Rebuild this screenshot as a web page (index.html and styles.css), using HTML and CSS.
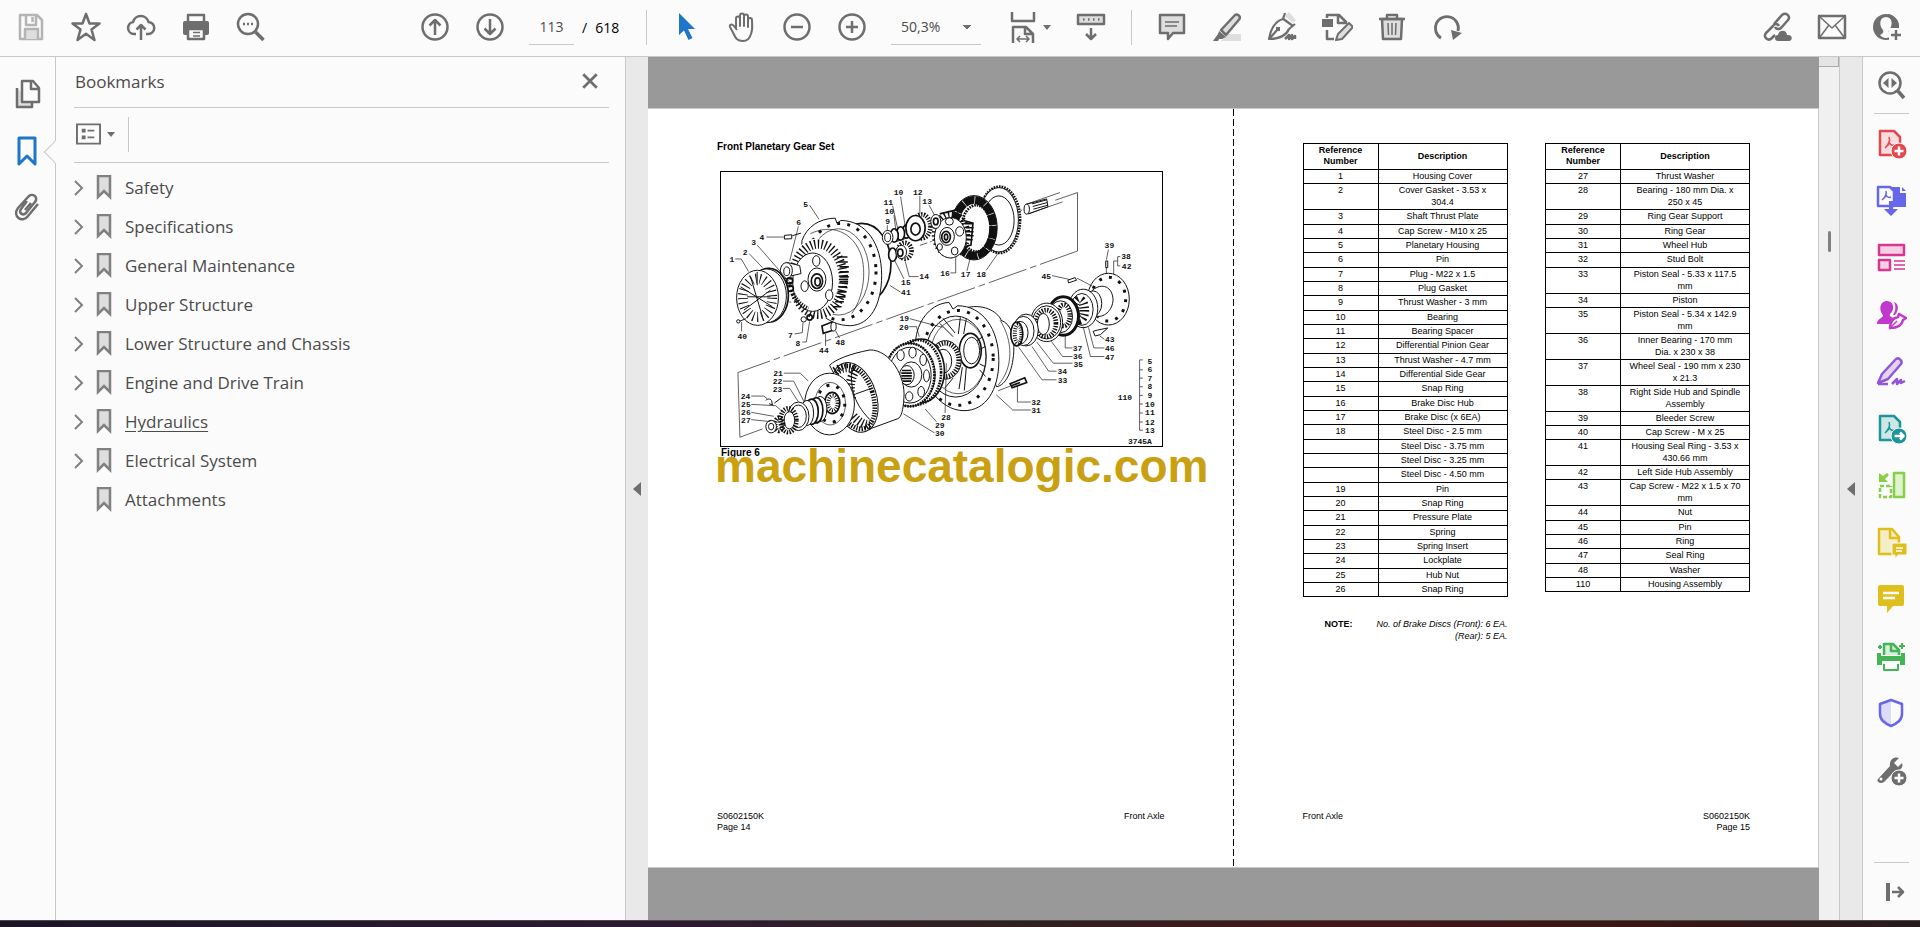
FILE: index.html
```html
<!DOCTYPE html>
<html lang="en">
<head>
  <meta charset="UTF-8">
  <meta name="viewport" content="width=device-width, initial-scale=1.0">
  <title>Front Planetary Gear Set</title>
  <link rel="stylesheet" href="styles.css">
</head>
<body>
  <header class="toolbar">
    <div class="tools tools-file">
      <button class="tool disabled" aria-label="Save">
        <svg class="icon" viewBox="0 0 32 32"><path d="M5 4h17l5 5v19H5z"/><path d="M11 4v10h10V4M17.500 6v5"/><path class="soft" d="M10 28V18h13v10"/></svg>
      </button>
      <button class="tool" aria-label="Star">
        <svg class="icon" viewBox="0 0 32 32"><path d="M16 3l3.500 9.500h10L21.500 18.500 24.500 29 16 22.800 7.500 29l3-10.500-8-6h10z"/></svg>
      </button>
      <button class="tool" aria-label="Upload">
        <svg class="icon" viewBox="0 0 32 32"><path d="M11 23H9a6 6 0 0 1-1-11.900A8 8 0 0 1 23.500 11 6 6 0 0 1 23 23h-2M16 29V14M11.500 18.500L16 14l4.500 4.500"/></svg>
      </button>
      <button class="tool" aria-label="Print">
        <svg class="icon" viewBox="0 0 32 32"><path d="M8 11V4h16v7"/><path class="solid" d="M3 12a2 2 0 0 1 2-2h22a2 2 0 0 1 2 2v10a2 2 0 0 1-2 2H5a2 2 0 0 1-2-2z"/><path class="paper" d="M8 18h16v10H8z"/><path d="M13 21.500h7M13 25h7" stroke-width="1.500"/></svg>
      </button>
      <button class="tool" aria-label="Find">
        <svg class="icon" viewBox="0 0 32 32"><circle cx="13" cy="13" r="10"/><path d="M20.500 21l8 8" stroke-width="3.500"/><path d="M8 13h2M12 13h2M16 13h2"/></svg>
      </button>
    </div>
    <div class="tools tools-pages">
      <button class="tool" aria-label="Previous page">
        <svg class="icon" viewBox="0 0 32 32"><circle cx="16" cy="16" r="12.500"/><path d="M16 24V9.500M10.500 14.500L16 9l5.500 5.500"/></svg>
      </button>
      <button class="tool" aria-label="Next page">
        <svg class="icon" viewBox="0 0 32 32"><circle cx="16" cy="16" r="12.500"/><path d="M16 8v14.500M10.500 17.500L16 23l5.500-5.500"/></svg>
      </button>
      <input class="page-input" type="text" value="113" aria-label="Page number">
      <span class="page-total"><span>/</span><span>618</span></span>
    </div>
    <div class="tools tools-view">
      <button class="tool" aria-label="Select">
        <svg class="icon" viewBox="0 0 32 32"><path class="accent" d="M8 2l16 16h-7l4.500 9-4 2-4.500-9.500L8 24z"/></svg>
      </button>
      <button class="tool" aria-label="Hand">
        <svg class="icon" viewBox="0 0 32 32"><path d="M10 18V7.500a2 2 0 0 1 4 0V15 4.500a2 2 0 0 1 4 0V15 5.500a2 2 0 0 1 4 0V16 9a2 2 0 0 1 4 0c0 5 1 9-1 14-1.500 5-4 7-8 7-6 0-7.500-3-9.500-7.500L4 16c-1-2.500 2-3.500 3.500-1.500L11 19" stroke-width="2"/></svg>
      </button>
      <button class="tool" aria-label="Zoom out">
        <svg class="icon" viewBox="0 0 32 32"><circle cx="16" cy="16" r="12.500"/><path d="M10 16h12"/></svg>
      </button>
      <button class="tool" aria-label="Zoom in">
        <svg class="icon" viewBox="0 0 32 32"><circle cx="16" cy="16" r="12.500"/><path d="M10 16h12M16 10v12"/></svg>
      </button>
      <select class="zoom-select" aria-label="Zoom level">
        <option>50,3%</option>
        <option>100%</option>
      </select>
      <button class="tool tool-menu" aria-label="Page fit">
        <svg class="icon" viewBox="0 0 32 32"><path d="M5 1v9h22V1M6 32V16h13l7 7v9M18 16v7h8"/><path d="M10 28h12M13 25l-3 3 3 3M19 25l3 3-3 3" stroke-width="1.500"/></svg>
        <span class="caret"></span>
      </button>
      <button class="tool" aria-label="Read mode">
        <svg class="icon" viewBox="0 0 32 32"><path class="soft" d="M3 4h26v9H3z"/><path d="M8 8.500h1.500M13 8.500h1.500M18 8.500h1.500M23 8.500h1.500M16 17v10M11 23l5 5 5-5"/></svg>
      </button>
    </div>
    <div class="tools tools-edit">
      <button class="tool" aria-label="Comment">
        <svg class="icon" viewBox="0 0 32 32"><path class="soft" d="M4 4h24v18H17l-5 6v-6H4z"/><path d="M9 11h14M9 15h12" stroke-width="1.500"/></svg>
      </button>
      <button class="tool" aria-label="Highlight">
        <svg class="icon" viewBox="0 0 32 32"><path class="tint" d="M17 23h13v7H10z"/><path class="soft" d="M10 19L24 4c2-1.500 6 1 4.500 4L15 24z"/><path class="solid" d="M8 20l7 6-4 2H8l-1 2H2l5-7z"/></svg>
      </button>
      <button class="tool" aria-label="Sign">
        <svg class="icon" viewBox="0 0 32 32"><path class="tint" d="M19 5l8 7 3-3-7-8z"/><path d="M16 7l11 8M19 2l-2 6C9 10 5 17 3 28c10 0 17-3 20-10l6-5M4 27l8-9" stroke-width="2.200"/><path class="solid" d="M10 16h4v4h-4z"/><path d="M19 28l4-4v4l3-4v4l3-3v3"/></svg>
      </button>
      <button class="tool" aria-label="Edit">
        <svg class="icon" viewBox="0 0 32 32"><path class="solid" d="M1 8h11v8H1z"/><path d="M6 7V4h12l7 7v2M17 4v8h8M6 19v9h7"/><path class="soft" d="M15 29l2-6L28 12l4 4-11 12z" stroke-width="2"/></svg>
      </button>
      <button class="tool" aria-label="Delete">
        <svg class="icon" viewBox="0 0 32 32"><path class="soft" d="M6 8h20l-1 20H7z"/><path d="M3 8h26M11 7V4h10v3"/><path d="M12 12l.5 12M16 12v12M20 12l-.5 12" stroke-width="1.500"/></svg>
      </button>
      <button class="tool" aria-label="Rotate">
        <svg class="icon" viewBox="0 0 32 32"><path d="M10 27A11.500 11.500 0 1 1 27 20" stroke-width="2.800"/><path class="solid" d="M20 19l11 3-9 7z"/></svg>
      </button>
    </div>
    <div class="tools tools-share">
      <button class="tool" aria-label="Share link">
        <svg class="icon" viewBox="0 0 32 32"><path d="M13 13l8-9c4-3 9 1 6 5l-7 8c-2 2-5 1-6-1M18 15c-2-3-5-2-6 0l-7 7c-3 4 2 9 6 5l3-3"/><path class="solid" d="M17 30a3 3 0 0 1 0-6c1-6 9-5 9 0 6-1 6 6 2 6z"/></svg>
      </button>
      <button class="tool" aria-label="Email">
        <svg class="icon" viewBox="0 0 32 32"><path d="M3 5h26v22H3z"/><path d="M4 6l12 11L28 6M4 26l9-12M28 26l-9-12" stroke-width="1.500"/></svg>
      </button>
      <button class="tool" aria-label="Account">
        <svg class="icon" viewBox="0 0 32 32"><circle class="solid" cx="15" cy="16" r="13"/><path class="cut" d="M15 6c7 0 7 9 3 13-1 3 1 4 3 5-3 4-9 4-12 0 2-1 4-2 3-5-4-4-4-13 3-13z"/><path class="cut" d="M18 17h14v15H18z"/><path class="solid" d="M17 3a13 13 0 0 1 11 14h-4l-4-1c3-5 2-10-3-11z"/><path d="M25 19v10M20 24h10"/></svg>
      </button>
    </div>
  </header>

  <div class="workspace">
    <nav class="rail" aria-label="Panels">
      <button class="rail-button" aria-label="Page thumbnails">
        <svg class="icon" viewBox="0 0 32 32"><path class="soft" d="M6 10v19h15v-5"/><path class="paper" d="M11 3h11l6 7v14H11z"/><path d="M20 3v8h8"/></svg>
      </button>
      <button class="rail-button active" aria-label="Bookmarks">
        <svg class="icon" viewBox="0 0 32 32"><path d="M8 3h16v26l-8-8-8 8z" stroke-width="3"/></svg>
      </button>
      <button class="rail-button" aria-label="Attachments">
        <svg class="icon" viewBox="0 0 32 32"><path d="M16 9l-6 8c-3 4 2 7 5 4l9-11c4-5-3-10-7-5L7 16c-6 8 4 16 10 8l10-12M20 11l-6 7"/></svg>
      </button>
    </nav>

    <aside class="panel">
      <div class="panel-header">
        <h2>Bookmarks</h2>
        <button class="close" aria-label="Close panel">
          <svg viewBox="0 0 16 16"><path d="M2 2l12 12M14 2L2 14"/></svg>
        </button>
      </div>
      <div class="panel-options">
        <button class="options" aria-label="Options">
          <svg viewBox="0 0 26 22"><path d="M1 1h24v20H1z"/><path d="M6 7.500h4M6 14.500h4" stroke-width="4"/><path d="M12 7.500h7M12 14.500h7"/></svg>
          <span class="caret"></span>
        </button>
      </div>
      <ul class="bookmarks" id="bookmarks"></ul>
    </aside>

    <button class="splitter splitter-left" aria-label="Collapse panel"><span class="collapse"></span></button>

    <main class="viewer">
      <div class="spread">
        <article class="page">
          <h1>Front Planetary Gear Set</h1>
          <figure>
            <svg class="diagram" viewBox="31 124 1327 826" role="img" aria-label="Exploded view of the front planetary gear set">
              <!-- axis and fold lines -->
              <g class="thin">
                <path d="M1038 209l67-23v176" />
                <path d="M1105 362L82 728" stroke-dasharray="120 12 20 12"/>
                <path d="M82 728l6 195 68-25"/>
                <path d="M500 385l50-14M630 345l60-20M860 268l90-34M205 510l60 10" stroke-dasharray="24 8 6 8"/>
              </g>
              <!-- planetary housing -->
              <g>
                <ellipse cx="455" cy="400" rx="88" ry="121" class="bold"/>
                <path class="paper" d="M275 330c15-40 50-66 100-67l5 15 12-8c75 0 123 70 123 165 0 90-35 150-95 152-70 0-130-60-150-130z"/>
                <ellipse cx="385" cy="425" rx="92" ry="130" class="thin"/>
                <path d="M300 310c60-30 130-10 155 70 15 60 0 130-30 170" class="thin"/>
                <ellipse cx="390" cy="424" rx="108" ry="145" class="holes"/>
                <ellipse cx="322" cy="447" rx="92" ry="123" class="paper outline-none"/>
                <ellipse cx="324" cy="447" rx="76" ry="106" class="ribs"/>
                <path d="M380 380h32M385 395h28M388 410h28M388 425h28M388 440h28M388 455h26M385 470h26M382 485h26M380 500h26M375 515h26M368 530h26" class="bold"/>
                <ellipse cx="307" cy="456" rx="60" ry="88"/>
                <ellipse cx="318" cy="392" rx="11" ry="16"/>
                <ellipse cx="357" cy="495" rx="11" ry="16"/>
                <ellipse cx="283" cy="468" rx="11" ry="16"/>
                <ellipse cx="320" cy="448" rx="27" ry="35"/>
                <ellipse cx="320" cy="453" rx="17" ry="22" class="bold"/>
                <ellipse cx="322" cy="455" rx="8" ry="12" class="bold"/>
                <path class="paper" d="M228 396l40 10 4 24-34 8"/>
                <ellipse cx="228" cy="421" rx="18" ry="24"/>
                <ellipse cx="229" cy="423" rx="9" ry="13"/>
                <circle cx="238" cy="452" r="9" class="bold"/>
                <circle cx="240" cy="475" r="9" class="bold"/>
                <path d="M248 492c12 22 26 36 46 44" class="teeth"/>
                <circle cx="280" cy="568" r="8"/><circle cx="298" cy="562" r="8" class="bold"/>
                <path d="M222 315l22-2v12l-22 1zM246 316l26-8"/>
                <path d="M335 588l30-12 6 24-32 10z" class="bold"/><ellipse cx="370" cy="590" rx="8" ry="13"/>
              </g>
              <!-- housing cover -->
              <g>
                <ellipse cx="175" cy="495" rx="59" ry="81" class="bold"/>
                <ellipse cx="168" cy="497" rx="60" ry="81"/>
                <ellipse cx="141" cy="503" rx="63" ry="83"/>
                <ellipse cx="141" cy="503" rx="44" ry="58" class="spokes"/>
                <path d="M90 470l96 60M120 440l36 120M100 540l80-60M140 425v40M110 500h70"/>
                <circle cx="83" cy="574" r="5"/><path d="M88 573l18-7"/>
              </g>
              <!-- sun gear stack -->
              <g>
                <path d="M545 302l60-20 8 34-62 20z" class="paper"/>
                <ellipse cx="603" cy="299" rx="14" ry="20"/>
                <ellipse cx="590" cy="303" rx="12" ry="20" class="bold"/>
                <ellipse cx="572" cy="309" rx="12" ry="20" class="bold"/>
                <ellipse cx="553" cy="315" rx="12" ry="20" class="bold"/>
                <ellipse cx="533" cy="321" rx="16" ry="21"/>
                <ellipse cx="533" cy="321" rx="9" ry="13"/>
                <ellipse cx="636" cy="288" rx="26" ry="36" class="teeth"/>
                <ellipse cx="617" cy="293" rx="29" ry="38" class="bold"/>
                <ellipse cx="617" cy="296" rx="14" ry="18" class="bold"/>
                <ellipse cx="548" cy="373" rx="12" ry="20" class="bold"/>
                <ellipse cx="585" cy="361" rx="20" ry="24" class="teeth"/>
                <ellipse cx="574" cy="365" rx="16" ry="20" class="paper"/>
                <ellipse cx="571" cy="367" rx="8" ry="11" class="bold"/>
              </g>
              <!-- brake discs and hub -->
              <g>
                <ellipse cx="870" cy="268" rx="62" ry="100" class="teeth-fine"/>
                <ellipse cx="868" cy="268" rx="59" ry="97" class="paper"/>
                <ellipse cx="868" cy="270" rx="46" ry="74"/>
                <ellipse cx="793" cy="292" rx="70" ry="97"/>
                <ellipse cx="793" cy="292" rx="58" ry="84" class="friction"/>
                <ellipse cx="800" cy="294" rx="44" ry="70" class="teeth-fine"/>
                <ellipse cx="724" cy="312" rx="44" ry="58" class="ribs"/>
                <path d="M690 250l60-14M762 270l28 8-6 66-24 6" class="bold"/>
                <path d="M765 280h24M768 292h24M768 304h24M768 316h24M765 328h24" class="bold"/>
                <ellipse cx="722" cy="322" rx="48" ry="61" class="paper"/>
                <ellipse cx="719" cy="273" rx="12" ry="11"/>
                <ellipse cx="750" cy="303" rx="12" ry="14"/>
                <ellipse cx="735" cy="362" rx="10" ry="12"/>
                <ellipse cx="690" cy="350" rx="8" ry="10"/>
                <ellipse cx="712" cy="318" rx="22" ry="27"/>
                <ellipse cx="709" cy="320" rx="13" ry="17" class="bold"/>
                <ellipse cx="709" cy="320" rx="5" ry="9" class="bold"/>
                <ellipse cx="678" cy="273" rx="15" ry="21" class="paper"/>
                <ellipse cx="678" cy="273" rx="7" ry="10" class="bold"/>
                <path d="M948 222l104-36M956 250l104-36" class="thin"/>
                <path d="M952 221l60-16 4 24-58 21z"/>
                <path d="M968 220l44-12M970 228l44-12M972 236l44-12"/>
                <ellipse cx="952" cy="236" rx="8" ry="15" class="paper"/>
              </g>
              <!-- wheel hub -->
              <g>
                <path class="paper" d="M770 533c60-15 100 20 105 38 30 10 40 50 38 95-4 60-24 100-52 105z"/>
                <path d="M872 571c38 60 42 140-6 195" class="thin"/>
                <path class="paper" d="M618 625c8-60 50-106 100-108l12 20 14-10c75 0 124 70 124 165 0 90-40 151-105 151-75 0-136-90-145-190z"/>
                <ellipse cx="744" cy="684" rx="107" ry="143" class="holes"/>
                <ellipse cx="738" cy="680" rx="92" ry="122"/>
                <ellipse cx="745" cy="680" rx="84" ry="112" class="thin"/>
                <ellipse cx="782" cy="662" rx="33" ry="52" class="bold"/>
                <ellipse cx="786" cy="662" rx="24" ry="40"/>
                <path d="M690 580l40 40M700 565l36 44M752 562l-6 50M770 566l-8 46M820 620l-18 12M826 650l-14 8M810 720l18 20M770 712l-6 70M758 712l-10 66M730 745l-25 30M826 710l-16-8"/>
              </g>
              <!-- ring gear support and bearing -->
              <g>
                <ellipse cx="707" cy="690" rx="48" ry="58" class="paper"/>
                <ellipse cx="707" cy="690" rx="40" ry="50" class="teeth"/>
                <ellipse cx="700" cy="694" rx="26" ry="36"/>
                <ellipse cx="634" cy="723" rx="70" ry="96" class="bold"/>
                <ellipse cx="622" cy="727" rx="72" ry="97" class="teeth-fine"/>
                <ellipse cx="600" cy="735" rx="76" ry="95" class="paper"/>
                <ellipse cx="600" cy="735" rx="74" ry="95" class="teeth-fine"/>
                <ellipse cx="600" cy="736" rx="64" ry="84"/>
                <g class="paper">
                  <ellipse cx="572" cy="676" rx="11" ry="16"/>
                  <ellipse cx="608" cy="668" rx="11" ry="16"/>
                  <ellipse cx="640" cy="690" rx="10" ry="17"/>
                  <ellipse cx="650" cy="738" rx="9" ry="18"/>
                  <ellipse cx="634" cy="786" rx="10" ry="16"/>
                  <ellipse cx="598" cy="800" rx="11" ry="14"/>
                  <ellipse cx="564" cy="782" rx="10" ry="15"/>
                  <ellipse cx="550" cy="738" rx="8" ry="17"/>
                </g>
                <ellipse cx="604" cy="734" rx="32" ry="38" class="paper"/>
                <ellipse cx="591" cy="736" rx="22" ry="29" class="paper"/>
                <path d="M576 722h28M574 730h32M574 738h32M574 746h32M578 754h26" class="bold"/>
              </g>
              <!-- ring gear -->
              <g>
                <path class="paper" d="M358 706c20-18 60-34 122-46 60 0 108 80 102 145-2 36-8 58-18 62l-104 38z"/>
                <ellipse cx="433" cy="803" rx="66" ry="108" transform="rotate(-18 433 803)"/>
                <ellipse cx="433" cy="803" rx="56" ry="98" transform="rotate(-18 433 803)" class="teeth"/>
                <path d="M375 725c20-15 45-15 62-5-20 30-20 60-12 90M430 860c14 16 32 28 50 26" class="ribs"/>
                <path d="M436 793l50-18"/>
                <path d="M425 715c-5 60 5 110 65 165"/>
              </g>
              <!-- pressure plate and springs -->
              <g>
                <ellipse cx="358" cy="823" rx="75" ry="93" class="paper"/>
                <ellipse cx="360" cy="822" rx="46" ry="64" class="thin"/>
                <ellipse cx="362" cy="822" rx="42" ry="56" class="holes"/>
                <ellipse cx="366" cy="820" rx="23" ry="32" class="bold"/>
                <ellipse cx="368" cy="820" rx="14" ry="22" class="ribs-small"/>
                <ellipse cx="330" cy="838" rx="20" ry="38"/>
                <ellipse cx="318" cy="842" rx="20" ry="38" class="bold"/>
                <ellipse cx="304" cy="846" rx="20" ry="38" class="bold"/>
                <ellipse cx="290" cy="850" rx="20" ry="38"/>
                <ellipse cx="264" cy="860" rx="32" ry="43" class="paper"/>
                <ellipse cx="264" cy="860" rx="24" ry="34"/>
                <ellipse cx="234" cy="872" rx="24" ry="36" class="teeth"/>
                <ellipse cx="237" cy="872" rx="16" ry="26" class="paper"/>
                <ellipse cx="206" cy="884" rx="12" ry="20" class="teeth"/>
                <ellipse cx="182" cy="891" rx="16" ry="19" class="paper"/>
                <ellipse cx="182" cy="891" rx="8" ry="10"/>
                <path d="M166 812c4-6 18-6 18 4l2 10-10-4M192 820l20-15"/>
              </g>
              <!-- outer bearings and spindle -->
              <g>
                <ellipse cx="1198" cy="507" rx="63" ry="78"/>
                <ellipse cx="1198" cy="507" rx="52" ry="66" class="holes"/>
                <path d="M1150 480c30-24 60-10 62 28 0 32-30 60-54 48z" class="paper"/>
                <ellipse cx="1152" cy="520" rx="26" ry="38" class="paper"/>
                <ellipse cx="1122" cy="535" rx="44" ry="58" class="paper"/>
                <ellipse cx="1118" cy="538" rx="34" ry="48"/>
                <ellipse cx="1112" cy="540" rx="14" ry="30" class="ribs"/>
                <ellipse cx="1062" cy="558" rx="46" ry="58" class="friction-thin"/>
                <ellipse cx="1054" cy="560" rx="36" ry="48"/>
                <ellipse cx="1064" cy="556" rx="18" ry="32" class="teeth"/>
                <ellipse cx="1012" cy="577" rx="48" ry="58" class="paper"/>
                <ellipse cx="1012" cy="577" rx="42" ry="50"/>
                <ellipse cx="1010" cy="580" rx="30" ry="40" class="teeth"/>
                <ellipse cx="1002" cy="582" rx="18" ry="32" class="paper"/>
                <ellipse cx="950" cy="600" rx="37" ry="48" class="paper"/>
                <ellipse cx="942" cy="603" rx="32" ry="44"/>
                <ellipse cx="932" cy="608" rx="24" ry="34" class="paper"/>
                <ellipse cx="922" cy="612" rx="18" ry="36" class="bold"/>
                <ellipse cx="926" cy="612" rx="10" ry="28" class="ribs-small"/>
                <path d="M1152 604l14-4 30-6-22 20-16 4zM1190 392h6v20h-6zM1076 450l22-8 4 8-24 8z"/>
                <path d="M902 762l44-18 6 14-44 16zM906 768l26-10" class="bold"/>
              </g>
              <!-- leader lines -->
              <g class="thin">
                <path d="M74 386h18l22 38M116 370l40 42M140 344l96 110M168 320h52M298 224l28 42M264 288l-26 104M532 284v16M552 254l6 48M548 226l16 72M572 198l14 90M630 196v54M658 224l16 30"/>
                <path d="M626 439h-28l-12-46M582 446l-28-56M572 486l-32-20M722 428h16v-45M772 422l10-40M830 420l36-52M93 604v-28M252 612l24-4 2-30M276 636h12l10-62M346 648v-36M388 624l-12-22"/>
                <path d="M600 566l98 26M598 590h22l8 30M220 730h50l24 24M218 754h32l32 64M218 776h20l26 40M122 799h38l10 8M122 824l74 4 20 18M122 848l68 12M122 870l58 6M706 850l4-150M680 876l-34-38M674 910l-94-58"/>
                <path d="M964 841h-54l-50-46M964 817h-40v-50M1042 750h-44l-70-98M1042 724h-24l-50-74M1090 700h-58l-50-64M1090 680h-30l-34-46M1090 654h-22v-42M1186 628l-14-10M1186 654h-32l-16-62M1186 680h-42l-22-90"/>
                <path d="M1198 358l-6 30M1192 412v18M1234 379h-8v28h8M1226 392h-12v40M1028 436l54 12M1104 444l46 24"/>
                <path d="M1302 690h-10v212h10M1292 720h10M1292 745h10M1292 771h10M1292 797h10M1292 823h10M1292 850h10M1292 877h10M866 783l36-14"/>
              </g>
              <g class="callouts" id="callouts"></g>
            </svg>
            <figcaption>Figure 6</figcaption>
            <div class="watermark">machinecatalogic.com</div>
          </figure>
          <footer class="page-footer">
            <p>S0602150K<br>Page 14</p>
            <p>Front Axle</p>
          </footer>
        </article>

        <article class="page page-right">
          <div class="tables">
            <table class="parts">
              <thead>
                <tr><th>Reference<br>Number</th><th>Description</th></tr>
              </thead>
              <tbody id="parts-left"></tbody>
            </table>
            <table class="parts">
              <thead>
                <tr><th>Reference<br>Number</th><th>Description</th></tr>
              </thead>
              <tbody id="parts-right"></tbody>
            </table>
          </div>
          <div class="note">
            <strong>NOTE:</strong>
            <em>No. of Brake Discs (Front): 6 EA.<br>(Rear): 5 EA.</em>
          </div>
          <footer class="page-footer">
            <p>Front Axle</p>
            <p class="right">S0602150K<br>Page 15</p>
          </footer>
        </article>
      </div>
    </main>

    <div class="scrollbar"><span class="scroll-top"></span><span class="scroll-thumb"></span></div>
    <button class="splitter splitter-right" aria-label="Collapse tools"><span class="collapse"></span></button>

    <nav class="rail rail-right" aria-label="Tools">
      <button class="rail-button" aria-label="Search tools">
        <svg class="icon" viewBox="0 0 32 32"><circle cx="15" cy="14" r="10.500"/><path d="M22 21l7 8" stroke-width="3.500"/><path class="solid" d="M13.500 9v10L8 14zM16.500 9v10l5.500-5z"/></svg>
      </button>
      <hr>
      <button class="rail-button red" aria-label="Create PDF">
        <svg class="icon" viewBox="0 0 32 32"><path class="soft" d="M5 4h14l6 6v18H5z"/><path d="M14 10c2 5-3 10-4 11M14 15c1 3 3 4 6 3M14 17l-4 4" stroke-width="1.500"/><circle class="badge" cx="24" cy="24" r="8"/><path class="mark" d="M24 19.500v9M19.500 24h9"/></svg>
      </button>
      <button class="rail-button blue" aria-label="Combine files">
        <svg class="icon" viewBox="0 0 32 32"><path class="solid" d="M15 3h10v6h6v14H15z"/><path class="solid" d="M27 3l4 4h-4z"/><path class="paper" d="M3 3h12l4 4v15H3z"/><path d="M11 7c1 4-2 7-3 8M11 11c1 2 3 3 5 2M11 12l-4 4" stroke-width="1.500"/><path class="solid" d="M14 17h4v8h5l-7 7-7-7h5z"/></svg>
      </button>
      <button class="rail-button pink" aria-label="Organize pages">
        <svg class="icon" viewBox="0 0 32 32"><path class="soft" d="M4 4h25v10H4zM4 19h11v10H4z"/><path d="M19 20h11M19 24h11M19 28h11" stroke-width="1.500"/></svg>
      </button>
      <button class="rail-button magenta" aria-label="Request signatures">
        <svg class="icon" viewBox="0 0 32 32"><path class="solid" d="M12 3c7 0 8 9 3 13-1 3 2 3 4 4l-5 6H2c0-6 7-6 6-9C4 13 4 3 12 3zM19 4c6 2 4 10 1 13l-2 0c3-4 3-10 1-13z"/><path class="paper" d="M15 30c0-6 3-10 8-11l1-3 7 4-3 2c-1 5-6 8-13 8z"/><path d="M16 29l6-6" stroke-width="1.500"/></svg>
      </button>
      <button class="rail-button purple" aria-label="Fill and sign">
        <svg class="icon" viewBox="0 0 32 32"><path class="soft" d="M3 28l4-9L21 4c3-2 7 2 5 5L13 24z"/><path d="M3 29h10M17 29l5-5v5l4-4v3l4-2"/></svg>
      </button>
      <button class="rail-button teal" aria-label="Export PDF">
        <svg class="icon" viewBox="0 0 32 32"><path class="soft" d="M5 4h14l6 6v18H5z"/><path d="M14 10c2 5-3 10-4 11M14 15c1 3 3 4 6 3M14 17l-4 4" stroke-width="1.500"/><circle class="badge" cx="24" cy="24" r="8"/><path class="mark" d="M19.500 24h9M25 20.500l3.500 3.500-3.500 3.500"/></svg>
      </button>
      <button class="rail-button lime" aria-label="Compare files">
        <svg class="icon" viewBox="0 0 32 32"><path class="soft" d="M19 4h10v24H19z"/><path d="M15 17H5v11h11V17" stroke-dasharray="4 2"/><path class="solid" d="M4 4v9h9l-3-3 4-4-2-2-4 3z"/></svg>
      </button>
      <button class="rail-button gold" aria-label="Send for comments">
        <svg class="icon" viewBox="0 0 32 32"><path class="soft" d="M4 3h13l7 8v17H4z"/><path d="M15 4v8h8"/><path class="badge" d="M17 17h15v12h-9l-3 4v-4h-3z"/><path class="mark" d="M21 22h7M21 25h6" stroke-width="1.500"/></svg>
      </button>
      <button class="rail-button gold" aria-label="Comment">
        <svg class="icon" viewBox="0 0 32 32"><path class="solid" d="M5 2h22a2 2 0 0 1 2 2v17a2 2 0 0 1-2 2h-9l-6 7v-7H5a2 2 0 0 1-2-2V4a2 2 0 0 1 2-2z"/><path class="mark" d="M8 10h16M8 15h12"/></svg>
      </button>
      <button class="rail-button green" aria-label="Scan and OCR">
        <svg class="icon" viewBox="0 0 32 32"><path class="soft" d="M9 15V4h9l6 6v5"/><path d="M16 4v7h7"/><path class="solid" d="M2 13h4v3h20v-3h4v12h-5v-4H7v4H2z"/><path d="M9 24v6h14v-6M27 3v6M24 6h6M5 5v4M3 7h4" stroke-width="2"/></svg>
      </button>
      <button class="rail-button blue" aria-label="Protect">
        <svg class="icon" viewBox="0 0 32 32"><path class="tint" d="M16 3L5 7v11c0 5 5 9 11 11z"/><path d="M16 3l11 4v10c0 6-4 9-11 12C9 26 5 23 5 17V7z"/></svg>
      </button>
      <button class="rail-button" aria-label="More tools">
        <svg class="icon" viewBox="0 0 32 32"><path class="solid" d="M3 25l12-13c-1-6 4-10 9-8l-5 5 4 4 4-4c2 5-3 8-6 7L9 28c-4 3-8-1-6-3z"/><circle class="hole" cx="6" cy="25" r="1.500"/><circle class="badge" cx="24" cy="24" r="8"/><path class="mark" d="M24 19.500v9M19.500 24h9"/></svg>
      </button>
      <div class="rail-bottom">
        <hr>
        <button class="rail-button" aria-label="Hide tools pane">
          <svg class="icon" viewBox="0 0 32 32"><path d="M13 7v18" stroke-width="4"/><path d="M17 16h11M23 11l5 5-5 5"/></svg>
        </button>
      </div>
    </nav>
  </div>

  <div class="desktop-edge"></div>
  <script src="script.js"></script>
</body>
</html>
```
FILE: styles.css
```css
:root {
  --ui-bg: #fbfbfb;
  --line: #c8c8c8;
  --icon: #6e6e6e;
  --icon-soft: #dedede;
  --accent: #1f74cc;
  --text: #4b4b4b;
}

* {
  margin: 0;
  padding: 0;
  box-sizing: border-box;
}

body {
  display: flex;
  flex-direction: column;
  min-height: 100vh;
  font-family: "Open Sans", "Noto Sans", sans-serif;
  background-color: var(--ui-bg);
  color: var(--text);
}

button {
  border: none;
  background: none;
  color: inherit;
  font: inherit;
  cursor: pointer;
}

/* Icons */
svg {
  display: block;
  fill: none;
  stroke: currentColor;
  stroke-width: 2.5;
}

.icon {
  width: 32px;
  height: 32px;
  flex: none;
}

.icon path,
.icon circle {
  stroke-linejoin: round;
}

.soft {
  fill: var(--icon-soft);
}

.tint {
  fill: var(--icon-soft);
  stroke: none;
}

.solid {
  fill: currentColor;
  stroke: none;
}

.accent {
  fill: var(--accent);
  stroke: none;
}

.cut {
  fill: var(--ui-bg);
  stroke: none;
}

.icon .paper {
  fill: var(--ui-bg);
}

.badge {
  fill: currentColor;
  stroke: var(--ui-bg);
  stroke-width: 1;
}

.mark {
  stroke: #ffffff;
}

.hole {
  fill: #ffffff;
  stroke: none;
}

.caret {
  border: 4px solid transparent;
  border-top: 5px solid var(--icon);
  border-bottom: none;
}

/* Toolbar */
.toolbar {
  display: flex;
  align-items: center;
  height: 57px;
  padding: 0 6px 2px 3px;
  border-bottom: 1px solid var(--line);
  color: var(--icon);
}

.tools {
  display: flex;
  align-items: center;
}

.tool {
  display: flex;
  align-items: center;
  justify-content: center;
  width: 55px;
  height: 44px;
}

.tool-menu {
  gap: 4px;
  width: 52px;
  margin: 0 8px 0 22px;
}

.disabled {
  color: #b4b4b4;
}

.tools-pages {
  margin-left: 129px;
}

.page-input,
.zoom-select {
  height: 36px;
  border: none;
  border-bottom: 1px solid var(--line);
  background: none;
  color: var(--text);
  font-family: inherit;
  font-size: 14px;
}

.page-input {
  width: 45px;
  margin-left: 12px;
  text-align: center;
}

.page-total {
  display: flex;
  gap: 8px;
  width: 72px;
  padding-left: 8px;
  color: #000000;
  font-size: 14px;
}

.tools-view,
.tools-edit {
  height: 35px;
  padding-left: 12px;
  border-left: 1px solid var(--line);
}

.tools-edit {
  margin-left: 13px;
}

.zoom-select {
  width: 90px;
  margin-left: 12px;
  padding: 0 10px;
  appearance: none;
  background: linear-gradient(to bottom right, var(--icon) 50%, transparent 50%) 76px 16px / 4px 5px no-repeat,
    linear-gradient(to bottom left, var(--icon) 50%, transparent 50%) 72px 16px / 4px 5px no-repeat;
}

.tools-share {
  margin-left: auto;
}

/* Workspace */
.workspace {
  display: flex;
  flex: 1;
}

.rail {
  display: flex;
  flex: none;
  flex-direction: column;
  width: 56px;
  padding-top: 8px;
  border-right: 1px solid var(--line);
  color: var(--icon);
}

.rail-button {
  position: relative;
  display: flex;
  flex: none;
  align-items: center;
  justify-content: center;
  width: 53px;
  height: 57px;
}

.rail-button.active {
  color: var(--accent);
}

.rail-button.active::after {
  content: "";
  position: absolute;
  right: -10px;
  top: 22px;
  width: 14px;
  height: 14px;
  border: 1px solid var(--line);
  border-top-color: transparent;
  border-right-color: transparent;
  background: var(--ui-bg);
  transform: rotate(45deg);
}

/* Bookmarks panel */
.panel {
  flex: none;
  width: 570px;
  padding: 0 16px 0 18px;
  border-right: 1px solid var(--line);
}

.panel-header {
  display: flex;
  align-items: center;
  justify-content: space-between;
  height: 51px;
  padding: 0 10px 2px 1px;
  border-bottom: 1px solid var(--line);
}

.panel-header h2 {
  font-size: 17px;
  font-weight: normal;
}

.close {
  width: 18px;
  height: 18px;
  color: var(--icon);
}

.close svg {
  width: 18px;
  height: 18px;
}

.panel-options {
  display: flex;
  align-items: center;
  height: 55px;
  padding-bottom: 2px;
  border-bottom: 1px solid var(--line);
}

.options {
  display: flex;
  align-items: center;
  gap: 6px;
  width: 55px;
  height: 35px;
  padding-left: 2px;
  border-right: 1px solid var(--line);
  color: var(--icon);
}

.options svg {
  width: 25px;
  height: 22px;
  stroke-width: 2;
}

.bookmarks {
  padding-top: 5px;
  list-style: none;
}

.bookmark {
  display: flex;
  align-items: center;
  height: 39px;
  font-size: 17px;
}

.bookmark svg {
  flex: none;
  color: #808080;
}

.bookmark .toggle {
  width: 22px;
  height: 18px;
}

.toggle svg {
  width: 10px;
  height: 16px;
  stroke-width: 2;
}

.bookmark .flag {
  width: 16px;
  height: 25px;
  margin-right: 13px;
}

.bookmark a {
  color: inherit;
  text-decoration: none;
}

.bookmark a.current {
  text-decoration: underline;
  text-underline-offset: 3px;
}

/* Splitters and scrollbar */
.splitter {
  display: flex;
  flex: none;
  align-items: center;
  justify-content: center;
  width: 22px;
  background-color: #e9e9e9;
}

.splitter-right {
  width: 23px;
  border-right: 1px solid var(--line);
}

.collapse {
  border: 7px solid transparent;
  border-right: 8px solid var(--icon);
  border-left: none;
}

.scrollbar {
  flex: none;
  width: 21px;
  border-right: 1px solid var(--line);
  background-color: #f0f0f0;
}

.scroll-top {
  display: block;
  height: 10px;
  border: 1px solid #aaaaaa;
  border-width: 0 1px 1px 0;
  background-color: #e4e4e4;
}

.scroll-thumb {
  display: block;
  width: 3px;
  height: 21px;
  margin: 164px 0 0 9px;
  border-radius: 2px;
  background-color: #808080;
}

/* Document */
.viewer {
  display: flex;
  flex: 1;
  min-width: 0;
  padding: 51px 0 52px;
  background-color: #999999;
}

.spread {
  display: flex;
  flex: 1;
  border: 1px solid var(--line);
  border-left: none;
  background-color: #ffffff;
  color: #000000;
  font-family: "Liberation Sans", Arial, sans-serif;
  font-size: 9px;
  line-height: 12px;
}

.page {
  display: flex;
  flex: 1;
  flex-direction: column;
  padding: 32px 68px 34px 69px;
}

.page-right {
  padding: 34px 68px 34px 70px;
  background: repeating-linear-gradient(to bottom, #000000 0 7px, transparent 7px 10px) left top / 1px 100% no-repeat;
}

.page h1 {
  margin-bottom: 18px;
  font-size: 10px;
  line-height: 12px;
}

figure {
  position: relative;
  margin: 0 2px 0 3px;
}

.diagram {
  width: 100%;
  border: 1px solid #000000;
  stroke: #111111;
  stroke-width: 3;
}

.diagram .paper,
.diagram ellipse {
  fill: #ffffff;
}

.diagram .outline-none {
  stroke: none;
}

.diagram .thin {
  fill: none;
  stroke-width: 2;
}

.diagram .bold {
  stroke-width: 5;
}

.diagram .holes {
  fill: none;
  stroke-width: 9;
  stroke-dasharray: 9 22;
}

.diagram .ribs {
  fill: none;
  stroke-width: 28;
  stroke-dasharray: 4 7;
}

.diagram .ribs-small {
  fill: none;
  stroke-width: 12;
  stroke-dasharray: 3 4;
}

.diagram .spokes {
  fill: none;
  stroke-width: 30;
  stroke-dasharray: 3 10;
}

.diagram .teeth {
  fill: none;
  stroke-width: 14;
  stroke-dasharray: 4 4;
}

.diagram .teeth-fine {
  fill: none;
  stroke-width: 8;
  stroke-dasharray: 5 3;
}

.diagram .friction {
  stroke-width: 24;
  stroke-dasharray: 32 2;
}

.diagram .friction-thin {
  stroke-width: 9;
}

.callouts {
  fill: #111111;
  stroke: none;
  font-family: "Liberation Mono", monospace;
  font-size: 24px;
  font-weight: bold;
  text-anchor: middle;
}

figcaption {
  margin-left: 1px;
  font-size: 10px;
  font-weight: bold;
}

.watermark {
  position: absolute;
  left: -5px;
  bottom: -33px;
  color: #c9a011;
  font-size: 46px;
  font-weight: bold;
  line-height: 52px;
  white-space: nowrap;
}

.page-footer {
  display: flex;
  justify-content: space-between;
  margin-top: auto;
  line-height: 11px;
}

.right {
  text-align: right;
}

/* Parts tables */
.tables {
  display: flex;
  align-items: flex-start;
  justify-content: space-between;
}

.parts {
  width: 205px;
  border-collapse: collapse;
  table-layout: fixed;
  text-align: center;
}

.parts th,
.parts td {
  height: 14px;
  padding-bottom: 1px;
  border: 1px solid #000000;
  vertical-align: top;
}

.parts th {
  height: 26px;
  line-height: 11px;
  vertical-align: middle;
}

.parts th:first-child {
  width: 75px;
}

.parts tr:nth-child(3n) td {
  height: 15px;
}

.note {
  display: flex;
  justify-content: space-between;
  width: 205px;
  margin-top: 21px;
  padding-left: 22px;
}

.note em {
  text-align: right;
}

/* Tools rail */
.rail-right {
  width: 57px;
  padding-top: 0;
  border-right: none;
}

.rail-right .rail-button {
  width: 56px;
}

.rail-right .rail-button:first-child {
  height: 56px;
}

.rail-right hr {
  width: 35px;
  margin-left: 11px;
  border: none;
  border-top: 1px solid var(--line);
}

.rail-bottom {
  margin-top: auto;
}

.red { color: #e34850; --icon-soft: #f9dcdd; }
.blue { color: #6767ec; --icon-soft: #dcdcf8; }
.pink { color: #d83790; --icon-soft: #f4d0e4; }
.magenta { color: #c038cc; }
.purple { color: #9256d9; --icon-soft: #e2d4f5; }
.teal { color: #1b959a; --icon-soft: #cfe6e7; }
.lime { color: #85d044; --icon-soft: #e0f3d0; }
.gold { color: #dfbf1c; --icon-soft: #f5edc6; }
.green { color: #44b556; --icon-soft: #d6efda; }

/* Strip of desktop below the window */
.desktop-edge {
  height: 7px;
  border-top: 1px solid #4a4a4a;
  background: linear-gradient(to right, #1c1526, #2d1a33 35%, #2f211e 52%, #43161a 70%, #3a1714 85%, #261a1c);
}
```
FILE: script.js
```js
const bookmarks = [
  "Safety",
  "Specifications",
  "General Maintenance",
  "Upper Structure",
  "Lower Structure and Chassis",
  "Engine and Drive Train",
  "Hydraulics",
  "Electrical System",
  "Attachments"
];

const partsLeft = [
  ["1", "Housing Cover"],
  ["2", "Cover Gasket - 3.53 x<br>304.4"],
  ["3", "Shaft Thrust Plate"],
  ["4", "Cap Screw - M10 x 25"],
  ["5", "Planetary Housing"],
  ["6", "Pin"],
  ["7", "Plug - M22 x 1.5"],
  ["8", "Plug Gasket"],
  ["9", "Thrust Washer - 3 mm"],
  ["10", "Bearing"],
  ["11", "Bearing Spacer"],
  ["12", "Differential Pinion Gear"],
  ["13", "Thrust Washer - 4.7 mm"],
  ["14", "Differential Side Gear"],
  ["15", "Snap Ring"],
  ["16", "Brake Disc Hub"],
  ["17", "Brake Disc (x 6EA)"],
  ["18", "Steel Disc - 2.5 mm"],
  ["", "Steel Disc - 3.75 mm"],
  ["", "Steel Disc - 3.25 mm"],
  ["", "Steel Disc - 4.50 mm"],
  ["19", "Pin"],
  ["20", "Snap Ring"],
  ["21", "Pressure Plate"],
  ["22", "Spring"],
  ["23", "Spring Insert"],
  ["24", "Lockplate"],
  ["25", "Hub Nut"],
  ["26", "Snap Ring"]
];

const partsRight = [
  ["27", "Thrust Washer"],
  ["28", "Bearing - 180 mm Dia. x<br>250 x 45"],
  ["29", "Ring Gear Support"],
  ["30", "Ring Gear"],
  ["31", "Wheel Hub"],
  ["32", "Stud Bolt"],
  ["33", "Piston Seal - 5.33 x 117.5<br>mm"],
  ["34", "Piston"],
  ["35", "Piston Seal - 5.34 x 142.9<br>mm"],
  ["36", "Inner Bearing - 170 mm<br>Dia. x 230 x 38"],
  ["37", "Wheel Seal - 190 mm x 230<br>x 21.3"],
  ["38", "Right Side Hub and Spindle<br>Assembly"],
  ["39", "Bleeder Screw"],
  ["40", "Cap Screw - M x 25"],
  ["41", "Housing Seal Ring - 3.53 x<br>430.66 mm"],
  ["42", "Left Side Hub Assembly"],
  ["43", "Cap Screw - M22 x 1.5 x 70<br>mm"],
  ["44", "Nut"],
  ["45", "Pin"],
  ["46", "Ring"],
  ["47", "Seal Ring"],
  ["48", "Washer"],
  ["110", "Housing Assembly"]
];

// Callout numbers on the exploded view: label, x, y
const callouts = [
  ["1", 64, 396], ["2", 104, 374], ["3", 129, 345], ["4", 154, 328], ["5", 286, 230],
  ["6", 265, 283], ["9", 533, 280], ["10", 538, 252], ["11", 535, 224], ["10", 566, 194],
  ["12", 624, 193], ["13", 652, 221], ["14", 643, 447], ["15", 588, 465], ["16", 706, 436],
  ["17", 768, 441], ["18", 815, 441], ["41", 588, 494], ["40", 95, 628], ["7", 240, 624],
  ["8", 263, 648], ["44", 341, 669], ["48", 390, 645], ["19", 583, 573], ["20", 582, 599],
  ["21", 203, 739], ["22", 201, 763], ["23", 201, 787], ["24", 105, 808], ["25", 106, 832],
  ["26", 106, 856], ["27", 106, 880], ["28", 709, 872], ["29", 690, 896], ["30", 690, 920],
  ["31", 980, 850], ["32", 980, 825], ["33", 1060, 759], ["34", 1059, 734], ["35", 1107, 711],
  ["36", 1106, 687], ["37", 1105, 662], ["43", 1202, 637], ["46", 1202, 663], ["47", 1202, 690],
  ["39", 1201, 354], ["38", 1251, 387], ["42", 1253, 415], ["45", 1011, 445],
  ["5", 1323, 703], ["6", 1323, 728], ["7", 1323, 754], ["8", 1323, 779], ["9", 1323, 805],
  ["10", 1323, 831], ["11", 1323, 857], ["12", 1323, 885], ["13", 1323, 911],
  ["110", 1248, 811], ["3745A", 1293, 943]
];

function renderParts(id, rows) {
  document.getElementById(id).innerHTML = rows
    .map(([ref, text]) => `<tr><td>${ref}</td><td>${text}</td></tr>`)
    .join("");
}

document.getElementById("bookmarks").innerHTML = bookmarks.map(name => `
  <li class="bookmark">
    ${name === "Attachments"
      ? `<span class="toggle"></span>`
      : `<button class="toggle" aria-label="Expand ${name}"><svg viewBox="0 0 10 16"><path d="M1 1l7 7-7 7"/></svg></button>`}
    <svg class="flag" viewBox="0 0 16 25"><path class="soft" d="M2 1h12v21l-6-6-6 6z"/></svg>
    <a href="#"${name === "Hydraulics" ? ` class="current"` : ""}>${name}</a>
  </li>`).join("");

renderParts("parts-left", partsLeft);
renderParts("parts-right", partsRight);

document.getElementById("callouts").innerHTML = callouts
  .map(([label, x, y]) => `<text x="${x}" y="${y}">${label}</text>`)
  .join("");
```
